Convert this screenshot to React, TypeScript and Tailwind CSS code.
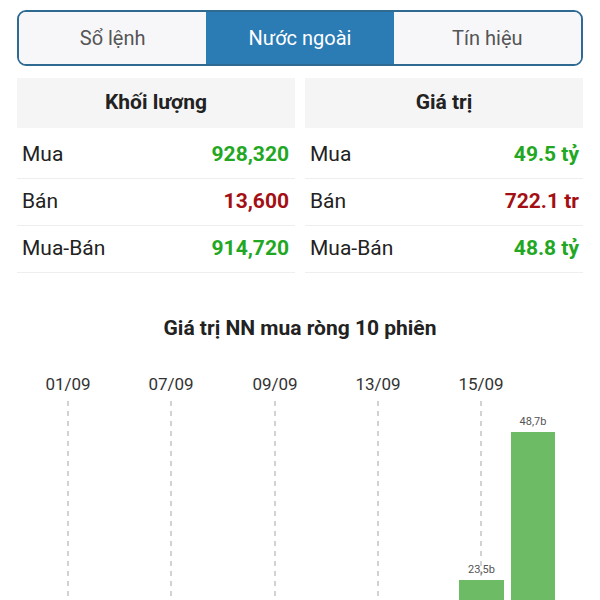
import React from 'react';

const tabs = ['Sổ lệnh', 'Nước ngoài', 'Tín hiệu'];

const volume = [
  { label: 'Mua', value: '928,320', tone: 'up' },
  { label: 'Bán', value: '13,600', tone: 'down' },
  { label: 'Mua-Bán', value: '914,720', tone: 'up' },
];

const amount = [
  { label: 'Mua', value: '49.5 tỷ', tone: 'up' },
  { label: 'Bán', value: '722.1 tr', tone: 'down' },
  { label: 'Mua-Bán', value: '48.8 tỷ', tone: 'up' },
];

const dates = [
  { label: '01/09', x: 68 },
  { label: '07/09', x: 171 },
  { label: '09/09', x: 275 },
  { label: '13/09', x: 378 },
  { label: '15/09', x: 481 },
];

const bars = [
  { x: 459, w: 45, top: 230, label: '23,5b' },
  { x: 511, w: 44, top: 82, label: '48,7b' },
];

const StatTable: React.FC<{ title: string; rows: typeof volume; right: string }> = ({ title, rows, right }) => (
  <div className="flex flex-col">
    <div className="h-[50px] flex items-center justify-center bg-[#f5f5f5] text-[21px] font-bold text-[#222]">
      {title}
    </div>
    <div className="h-[4px]" />
    {rows.map((r, i) => (
      <div
        key={i}
        className={`h-[47px] flex items-center justify-between border-b border-[#eeeeee] pl-[5px] ${right}`}
      >
        <span className="text-[21px] text-[#222]">{r.label}</span>
        <span
          className={`text-[21px] font-bold ${r.tone === 'up' ? 'text-[#22a722]' : 'text-[#a30f14]'}`}
        >
          {r.value}
        </span>
      </div>
    ))}
  </div>
);

export default function App() {
  return (
    <div className="w-[600px] h-[600px] overflow-hidden bg-white font-['Roboto','Liberation_Sans',sans-serif]">
      <div className="mx-[17px] mt-[10px] h-[56px] border-2 border-[#2e6a92] rounded-[9px] overflow-hidden grid grid-cols-3">
        {tabs.map((t, i) => (
          <div
            key={t}
            className={`flex items-center justify-center text-[20px] ${
              i === 1 ? 'bg-[#2b7bb5] text-white' : 'bg-[#f7f7f9] text-[#555]'
            }`}
          >
            {t}
          </div>
        ))}
      </div>

      <div className="mt-[12px] px-[17px] grid grid-cols-2 gap-[10px]">
        <StatTable title="Khối lượng" rows={volume} right="pr-[6px]" />
        <StatTable title="Giá trị" rows={amount} right="pr-[4px]" />
      </div>

      <div className="mt-[43px] text-center text-[21px] font-bold text-[#222] leading-[24px]">
        Giá trị NN mua ròng 10 phiên
      </div>

      <svg width="600" height="250" className="block mt-[10px]">
        {dates.map((d) => (
          <g key={d.label}>
            <text
              x={d.x}
              y={40}
              textAnchor="middle"
              fontSize="17"
              fill="#333"
              fontFamily="Roboto, 'Liberation Sans', sans-serif"
            >
              {d.label}
            </text>
            <line x1={d.x} y1={51} x2={d.x} y2={250} stroke="#b5b5b5" strokeWidth="1.2" strokeDasharray="5 5" />
          </g>
        ))}
        {bars.map((b) => (
          <g key={b.label}>
            <rect x={b.x} y={b.top} width={b.w} height={250 - b.top} fill="#6dbb65" />
            <text
              x={b.x + b.w / 2}
              y={b.top - 7}
              textAnchor="middle"
              fontSize="11"
              fill="#555"
              fontFamily="Roboto, 'Liberation Sans', sans-serif"
            >
              {b.label}
            </text>
          </g>
        ))}
      </svg>
    </div>
  );
}
